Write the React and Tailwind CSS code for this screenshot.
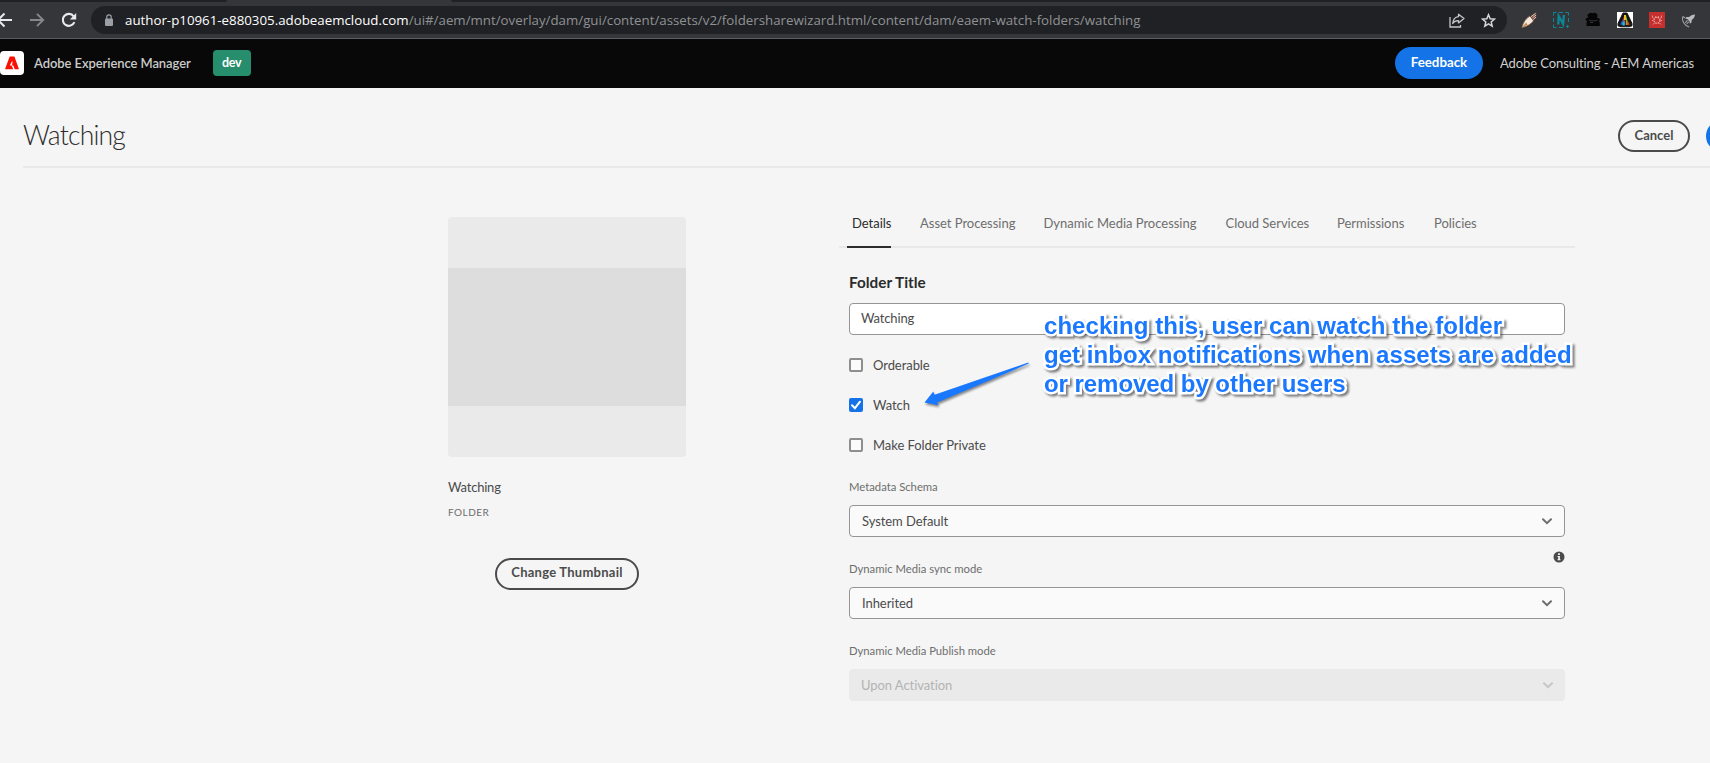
import React from "react";
import { clsx } from "clsx";

function BackIcon() {
  return (
    <svg className="-ml-1 size-4 shrink-0" viewBox="0 0 16 16" fill="none" stroke="#e8eaed" strokeWidth="2">
      <path d="M16 8H2M8.500 1.500L2 8l6.500 6.500" />
    </svg>
  );
}

function ForwardIcon() {
  return (
    <svg className="ml-[18px] size-4 shrink-0" viewBox="0 0 16 16" fill="none" stroke="#85878a" strokeWidth="1.900">
      <path d="M0 8h13M7 1.800L13.200 8 7 14.200" />
    </svg>
  );
}

function ReloadIcon() {
  return (
    <svg className="ml-4 size-4 shrink-0" viewBox="0 0 16 16" fill="none" stroke="#e8eaed" strokeWidth="2.100">
      <path d="M12.400 10.200A6 6 0 1 1 11.700 4.300" />
      <path d="M14.200 1v6.400H7.800z" fill="#e8eaed" stroke="none" />
    </svg>
  );
}

function LockIcon() {
  return (
    <svg className="ml-[14px] h-[12px] w-2 shrink-0" viewBox="0 0 8 12">
      <rect x="0" y="4.500" width="8" height="7.500" rx="1" fill="#9aa0a6" />
      <path d="M1.800 5V3a2.200 2.200 0 0 1 4.400 0v2" fill="none" stroke="#9aa0a6" strokeWidth="1.200" />
    </svg>
  );
}

function ShareIcon() {
  return (
    <svg className="h-[15px] w-4" viewBox="0 0 16 15" fill="none" stroke="#c4c7ca" strokeWidth="1.300">
      <path d="M1 4v10h10.500v-2" />
      <path d="M9.500 1.200L15 5.600l-5.500 4.300V7.600C7 7.500 5 8.400 3.700 10.500 4 6.700 6 4 9.500 3.600z" strokeLinejoin="round" />
    </svg>
  );
}

function StarIcon() {
  return (
    <svg className="size-[15px]" viewBox="0 0 15 15" fill="none" stroke="#d5d7da" strokeWidth="1.500">
      <path d="M7.500 1.700l1.700 4 4.300.4-3.300 2.800 1 4.200-3.700-2.200-3.700 2.200 1-4.200L1.500 6.100l4.300-.4z" />
    </svg>
  );
}

function Extensions() {
  return (
    <div className="flex items-center gap-4">
      <svg className="size-4" viewBox="0 0 16 16">
        <path d="M1 15.500C2 11 4.500 6.500 9 4l4 4c-2.500 4-7 6.500-12 7.500z" fill="#f3e9dd" stroke="#8a6248" strokeWidth=".8" />
        <path d="M.8 15.600l4.500-5.200 1.200 2.400z" fill="#c98a45" />
        <path d="M9 4.400l6.500-4.200v5L12.400 9z" fill="#6b3f36" />
        <path d="M10 4.700l4.600-3.400M11.300 6L15 3M12.300 7.500L15 5" stroke="#f1dcd2" strokeWidth=".9" />
      </svg>
      <svg className="size-4" viewBox="0 0 16 16" fill="none" stroke="#0c8797">
        <path d="M.5 3.500v-3h3M6 .5h4M12.500.5h3v3M15.500 6v4M.5 6v4M.5 12.500v3h3M6 15.500h4M13 14.500h3M14.500 13v3" />
        <path d="M5.300 12.500l.4-8.500 4.400 8 .8-9" strokeWidth="2.300" />
      </svg>
      <svg className="size-4" viewBox="0 0 16 16" fill="#050505">
        <path d="M2.500 2.500L4.500 1.200 6 .7l1.500.6L9.500.7l2 .8 1 1.200v1.800l-.7 1 3.200 1.500-1 2.500.8 1V14H1.500v-3.500l.8-1L.3 7.500 1.500 6l2.200-.8L2.500 4z" />
        <path d="M4 8.200c2.500 1 5.500 1 8.500-.2M5 10.500h3" stroke="#3d3e41" strokeWidth=".8" fill="none" />
      </svg>
      <svg className="size-4" viewBox="0 0 16 16">
        <path d="M0 0h16v16H0z" fill="#fff" />
        <path d="M6 1h4l5 10.500v2.300l-3 1H4l-3-1v-2.300z" fill="#141414" stroke="#141414" strokeLinejoin="round" />
        <path d="M7.800 3v10H6V7z" fill="#e5312d" />
        <path d="M6.300 6.500V13L3 12.500z" fill="#2361c9" />
        <path d="M7 3h2v5H7z" fill="#f4c51c" />
        <path d="M9 3.500l1.300 4.500v5H8.700z" fill="#72c62b" />
        <path d="M10 8l2.800 4.500-3 .8z" fill="#e94a22" />
        <path d="M5.500 10.500l2.200-1.500v4.500H5.500z" fill="#28b8e8" />
      </svg>
      <svg className="size-4" viewBox="0 0 16 16">
        <path d="M0 0h16v16H0z" fill="#c5302f" />
        <circle cx="8" cy="8.300" r="3" fill="none" stroke="#f2b4b0" strokeWidth="1.100" strokeDasharray="1.500 .9" />
        <path d="M3.500 3.500v2l1.500.8M12.500 3.500v2l-1.500.8M3 8.500h1.500M11.500 8.500H13M4 12.500l1.500-1.500M12 12.500L10.500 11M6.500 4l.6 1.500M9.500 4l-.6 1.500" fill="none" stroke="#e89c98" strokeWidth=".9" />
      </svg>
      <svg className="size-4" viewBox="0 0 16 16">
        <path d="M14 2.500c-2.600.1-4.300 1-5.900 2.600L5.500 5 4.200 6.600l2.200.4 2.200 2.400.3 2.300 1.600-1.200.2-2.500C12.500 6.600 13.800 5 14 2.500z" fill="#b9babc" />
        <path d="M1.500 4.500c-.5 4.500 1.500 8.500 6.600 10.500M6.500 8.200l-2.300 2.600M7.800 9.600l-2 2.300M2 4.500L4 6" stroke="#9b9c9f" strokeWidth="1.100" fill="none" />
      </svg>
    </div>
  );
}

function BrowserBar() {
  return (
    <div className="flex h-[39px] flex-col border-b border-[#5c5d60] bg-[#35363a] font-['Open_Sans',sans-serif]">
      <div className="flex h-[2px] justify-between">
        <div className="w-[227px] rounded-br bg-[#202124]" />
        <div className="w-[1259px] rounded-bl bg-[#202124]" />
      </div>
      <div className="flex flex-1 items-center">
        <div className="flex w-[91px] items-center">
          <BackIcon />
          <ForwardIcon />
          <ReloadIcon />
        </div>
        <div className="flex h-7 w-[1416px] items-center rounded-full bg-[#202124]">
          <LockIcon />
          <div className="ml-[12px] flex-1 whitespace-nowrap text-[13.3px] leading-5 text-[#8f9194]">
            <span className="text-white">author-p10961-e880305.adobeaemcloud.com</span>
            <span>/ui#/aem/mnt/overlay/dam/gui/content/assets/v2/foldersharewizard.html/content/dam/eaem-watch-folders/watching</span>
          </div>
          <div className="mr-[11px] flex items-center gap-4">
            <ShareIcon />
            <StarIcon />
          </div>
        </div>
        <div className="ml-[14px]">
          <Extensions />
        </div>
      </div>
    </div>
  );
}

function ShellHeader() {
  return (
    <header className="flex h-[49px] items-center bg-[#080808] pb-px">
      <svg className="size-6 shrink-0" viewBox="0 0 24 24">
        <rect width="24" height="24" rx="4" fill="#fff" />
        <path d="M9.700 5.500h4.700L19 18.300h-4.200l-1.500-3.900h-1.200l.1-1 .3-2.500-.4-1-2.300 4.500h1.900l1.500 3.900H5z" fill="#fa0f00" />
      </svg>
      <div className="ml-[10px] pt-px text-[13px] font-semibold tracking-[-0.08px] text-[#cacaca]">Adobe Experience Manager</div>
      <div className="ml-[22px] flex h-[26px] w-[38px] items-center justify-center rounded bg-[#268e6c] pt-px text-[12.5px] font-bold tracking-[-0.3px] text-white">
        dev
      </div>
      <button className="ml-auto flex h-8 w-[88px] items-center justify-center rounded-full bg-[#1473e6] pb-px text-[13.3px] font-bold text-white">
        Feedback
      </button>
      <div className="ml-[17px] mr-4 pt-px text-[13px] tracking-[-0.08px] text-[#d0d0d0]">Adobe Consulting - AEM Americas</div>
    </header>
  );
}

function TitleRow() {
  return (
    <div className="ml-[23px] flex h-20 items-center overflow-hidden border-b-2 border-[#e8e8e8]">
      <h1 className="flex-1 pt-[16px] text-[26.500px] font-light leading-8 tracking-[-0.800px] text-[#2c2c2c]">Watching</h1>
      <button className="mt-[18px] h-8 w-[72px] rounded-full border-2 border-[#4b4b4b] pb-px text-[13px] font-bold leading-none text-[#4b4b4b]">
        Cancel
      </button>
      <div className="ml-4 mt-[18px] h-8 w-1 overflow-hidden">
        <div className="h-8 w-24 rounded-full bg-[#1473e6]" />
      </div>
    </div>
  );
}

function Thumbnail() {
  return (
    <aside className="flex w-[238px] flex-col pt-[49px]">
      <div className="flex h-60 items-center rounded bg-[#eaeaea]">
        <div className="h-[138px] w-full bg-[#dddddd]" />
      </div>
      <div className="mt-5 text-[13px] leading-5 tracking-[-0.2px] text-[#4b4b4b]">Watching</div>
      <div className="mt-[6px] text-[10px] leading-[18px] tracking-[0.5px] text-[#6e6e6e]">FOLDER</div>
      <button className="mt-[37px] h-8 w-36 self-center rounded-full border-2 border-[#4b4b4b] pb-[3px] text-[13px] font-bold leading-none tracking-[0.25px] text-[#4b4b4b]">
        Change Thumbnail
      </button>
    </aside>
  );
}

const TABS = [
  ["Details", "w-[39px]"],
  ["Asset Processing", "w-[94.5px]"],
  ["Dynamic Media Processing", "w-[153px]"],
  ["Cloud Services", "w-[82.5px]"],
  ["Permissions", "w-[68px]"],
  ["Policies", "w-[44px]"],
];

function Tabs() {
  return (
    <nav className="ml-[-10px] flex h-[80px] w-[736px] border-b-2 border-[#e8e8e8] pl-2">
      {TABS.map(([name, width], i) => (
        <div
          key={name}
          className={clsx(
            "-mb-[2px] mr-[29px] flex items-start whitespace-nowrap border-b-2 pt-[45px] text-[13px] leading-5 tracking-[-0.02px]",
            i === 0 ? "border-[#2c2c2c] pl-[5px] text-[#2c2c2c]" : "border-transparent text-[#6e6e6e]"
          )}
        >
          <span className={width}>{name}</span>
        </div>
      ))}
    </nav>
  );
}

function CheckRow({ label, checked }) {
  return (
    <label className="flex h-10 items-center">
      {checked ? (
        <svg className="size-[14px]" viewBox="0 0 14 14">
          <rect width="14" height="14" rx="2" fill="#1473e6" />
          <path d="M3 7.300L5.900 10.200 11 3.700" fill="none" stroke="#fff" strokeWidth="2" strokeLinecap="round" />
        </svg>
      ) : (
        <span className="size-[14px] rounded-[2px] border-2 border-[#8e8e8e] bg-[#fafafa]" />
      )}
      <span className="ml-[10px] text-[13px] leading-5 tracking-[-0.06px] text-[#4b4b4b]">{label}</span>
    </label>
  );
}

function SelectField({ label, value, disabled }) {
  return (
    <div>
      <div className="text-[11.300px] leading-4 tracking-[-0.02px] text-[#6e6e6e]">{label}</div>
      <div
        className={clsx(
          "mt-[10px] flex h-8 w-[716px] items-center justify-between rounded border text-[13px] tracking-[-0.06px]",
          disabled ? "border-[#eaeaea] bg-[#eaeaea] pl-[11px] pr-[11px] text-[#b3b3b3]" : "border-[#959595] bg-[#fafafa] pl-3 pr-3 text-[#4b4b4b]"
        )}
      >
        <span className="pt-[2px]">{value}</span>
        <svg className="h-[7px] w-[10px]" viewBox="0 0 10 7" fill="none" stroke={disabled ? "#c6c6c6" : "#6e6e6e"} strokeWidth="2" strokeLinecap="round">
          <path d="M1 1.200l4 4 4-4" />
        </svg>
      </div>
    </div>
  );
}

function Annotation() {
  return (
    <>
      <svg
        className="absolute left-[70px] top-[109px] h-[56px] w-[120px] drop-shadow-[1px_2px_1px_rgba(0,0,0,0.45)]"
        viewBox="919 356 120 56"
      >
        <path d="M924.500 401.500L933.300 390.500 934.500 393.800 1028.300 361.400 1028.800 362.600 937.200 401.500 938.500 404.300z" fill="#1a78ff" />
      </svg>
      <div className="absolute left-[195px] top-[63px] whitespace-nowrap font-['Liberation_Sans',sans-serif] text-[24px] font-bold leading-[29px] tracking-[0.05px] text-[#1a78ff] drop-shadow-[2px_2px_1px_rgba(0,0,0,0.5)] [-webkit-text-stroke:5px_white] [paint-order:stroke_fill]">
        <div>checking this, user can watch the folder</div>
        <div>get inbox notifications when assets are added</div>
        <div className="tracking-[-0.05px]">or removed by other users</div>
      </div>
    </>
  );
}

function Details() {
  return (
    <section className="relative flex flex-col pt-6">
      <h2 className="text-[15.300px] font-bold leading-5 text-[#2c2c2c]">Folder Title</h2>
      <div className="mt-[11px] flex h-8 w-[716px] items-center rounded border border-[#959595] bg-white pl-[11px] text-[13px] tracking-[-0.15px] text-[#4b4b4b]">
        Watching
      </div>
      <div className="mt-[10px] flex flex-col">
        <CheckRow label="Orderable" />
        <CheckRow label="Watch" checked />
        <CheckRow label="Make Folder Private" />
      </div>
      <div className="mt-[14px]">
        <SelectField label="Metadata Schema" value="System Default" />
      </div>
      <div className="flex h-6 w-[716px] items-end justify-end">
        <svg className="mb-[-2px] size-[12px]" viewBox="0 0 12 12">
          <circle cx="6" cy="6" r="5.500" fill="#4b4b4b" />
          <path d="M5.100 2.300h1.800V4H5.100zM4.500 5h2.400v3.300h.6v1h-3v-1h.7V6h-.7z" fill="#f5f5f5" />
        </svg>
      </div>
      <SelectField label="Dynamic Media sync mode" value="Inherited" />
      <div className="mt-6">
        <SelectField label="Dynamic Media Publish mode" value="Upon Activation" disabled />
      </div>
      <Annotation />
    </section>
  );
}

export default function App() {
  return (
    <div className="h-[763px] w-full overflow-hidden bg-[#f5f5f5] font-['Lato',sans-serif] [font-variant-ligatures:none]">
      <BrowserBar />
      <ShellHeader />
      <TitleRow />
      <main className="flex pl-[448px]">
        <Thumbnail />
        <div className="ml-[163px] flex w-[726px] flex-col">
          <Tabs />
          <Details />
        </div>
      </main>
    </div>
  );
}
